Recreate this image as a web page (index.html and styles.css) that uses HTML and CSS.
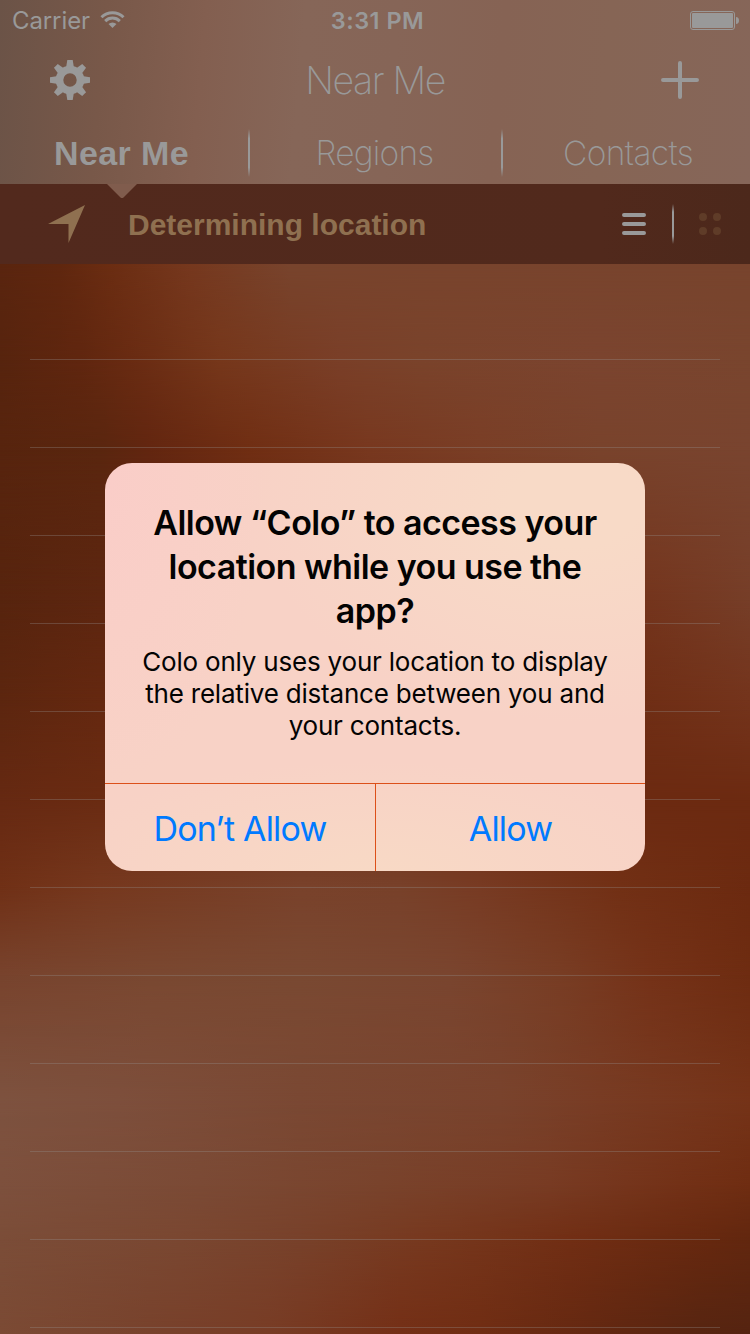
FILE: index.html
```
<!DOCTYPE html>
<html lang="en">
<head>
<meta charset="utf-8">
<title>Near Me</title>
<link rel="stylesheet" href="styles.css">
</head>
<body>
<div class="screen">
  <div class="wallpaper">
    <div class="band band-1"></div>
    <div class="band band-2"></div>
    <div class="band band-3"></div>
    <div class="band band-4"></div>
    <div class="band band-5"></div>
    <div class="band band-6"></div>
    <div class="band band-7"></div>
    <div class="band band-8"></div>
    <div class="band band-9"></div>
    <div class="band band-10"></div>
    <div class="band band-11"></div>
  </div>
  <main class="app">
    <header class="header">
      <div class="status">
        <div class="status-left">
          <span class="carrier">Carrier</span>
          <svg class="wifi" width="25" height="19" viewBox="0 0 26 20"><g fill="none" stroke="#999" stroke-width="3.1"><path d="M1.4 7.600a16.400 16.400 0 0 1 23.200 0"/><path d="M5.300 11.700a10.900 10.900 0 0 1 15.400 0"/></g><path fill="#999" d="M13 19l-4.200-4.200a6 6 0 0 1 8.400 0z"/></svg>
        </div>
        <span class="time">3:31 PM</span>
        <svg class="battery" width="49" height="19" viewBox="0 0 49 19"><rect x=".5" y=".5" width="44" height="18" rx="2.5" fill="none" stroke="#999"/><rect x="2" y="2" width="41" height="15" rx="1" fill="#999"/><path fill="#999" d="M46 6c2 0 3 1.500 3 3.500s-1 3.500-3 3.500z"/></svg>
      </div>
      <div class="navbar">
        <svg class="gear" width="40" height="40" viewBox="-20 -20 40 40"><defs><path id="tooth" d="M-4-12L-2.700-20H2.700L4-12z"/></defs><g fill="#999"><use href="#tooth"/><use href="#tooth" transform="rotate(45)"/><use href="#tooth" transform="rotate(90)"/><use href="#tooth" transform="rotate(135)"/><use href="#tooth" transform="rotate(180)"/><use href="#tooth" transform="rotate(225)"/><use href="#tooth" transform="rotate(270)"/><use href="#tooth" transform="rotate(315)"/></g><circle r="10.500" fill="none" stroke="#999" stroke-width="7.600"/></svg>
        <h1 class="nav-title">Near Me</h1>
        <svg class="plus" width="38" height="38" viewBox="0 0 38 38"><path d="M19 2v34M2 19h34" stroke="#999" stroke-width="4" stroke-linecap="round"/></svg>
      </div>
      <nav class="tabs">
        <span class="tab tab-active">Near Me</span>
        <i class="divider"></i>
        <span class="tab tab-regions">Regions</span>
        <i class="divider"></i>
        <span class="tab tab-contacts">Contacts</span>
      </nav>
    </header>
    <section class="locbar">
      <svg class="pointer" width="30" height="14" viewBox="0 0 30 14"><path d="M0 0h30L16.500 13.500q-1.500 1-3 0z" fill="#805c4d"/></svg>
      <svg class="arrow" width="37" height="39" viewBox="0 0 37 39"><path d="M37 0L20.500 38V19L0 19z" fill="#8f7050"/></svg>
      <span class="loc-text">Determining location</span>
      <svg class="list-icon" width="24" height="22" viewBox="0 0 24 22"><path d="M2 2h20M2 11h20M2 20h20" stroke="#999" stroke-width="4" stroke-linecap="round"/></svg>
      <i class="divider divider-small"></i>
      <svg class="grid-icon" width="22" height="22" viewBox="0 0 22 22"><g fill="#5f3c28"><circle cx="4" cy="4" r="4"/><circle cx="18" cy="4" r="4"/><circle cx="4" cy="18" r="4"/><circle cx="18" cy="18" r="4"/></g></svg>
    </section>
    <ul class="rows">
      <li class="row row-first"></li>
      <li class="row"></li><li class="row"></li><li class="row"></li>
      <li class="row"></li><li class="row"></li><li class="row"></li>
      <li class="row"></li><li class="row"></li><li class="row"></li>
      <li class="row"></li><li class="row"></li>
    </ul>
  </main>
  <div class="modal-layer">
    <div class="dialog" role="dialog">
      <div class="dialog-body">
        <h2 class="dialog-title">Allow “Colo” to access your<br>location while you use the<br>app?</h2>
        <p class="dialog-text">Colo only uses your location to display<br>the relative distance between you and<br>your contacts.</p>
      </div>
      <div class="actions">
        <button class="action action-deny">Don’t Allow</button>
        <button class="action">Allow</button>
      </div>
    </div>
  </div>
</div>
</body>
</html>
```
FILE: styles.css
```
* { box-sizing: border-box; }
body { margin: 0; }
.screen {
  display: grid;
  grid-template-columns: 750px;
  grid-template-rows: 1334px;
  width: 750px;
  height: 1334px;
  overflow: hidden;
  font-family: Inter, "Liberation Sans", sans-serif;
}
.screen > * { grid-area: 1 / 1; min-height: 0; }

/* Wallpaper: horizontal gradients, each fading vertically into the next. */
.wallpaper {
  --r1: linear-gradient(90deg, #5a250f 0, #60270f 60px, #6b2d12 110px, #76381e 190px, #78442d 290px, #79442d 450px, #78442d 750px);
  --r2: linear-gradient(90deg, #57240e 0, #60260f 80px, #692b12 130px, #76371b 220px, #7a3f28 340px, #7a432b 420px, #7b442f 600px, #79452e 750px);
  --r3: linear-gradient(90deg, #57240e 0, #5a260f 100px, #632610 150px, #702e13 250px, #78381f 370px, #7a3e26 480px, #79432c 600px, #79442f 750px);
  --r4: linear-gradient(90deg, #57240e 0, #5d2610 100px, #68280f 350px, #74341c 640px, #763e28 750px);
  --r5: linear-gradient(90deg, #5c260f 0, #652810 100px, #6b2a11 350px, #6f2e15 640px, #74341c 750px);
  --r6: linear-gradient(90deg, #662912 0, #6a2b12 100px, #6e2d14 350px, #6c2a11 640px, #6c2a11 750px);
  --r7: linear-gradient(90deg, #703016 0, #76381e 100px, #79422b 300px, #78412a 400px, #783b23 480px, #723015 620px, #6c2a10 750px);
  --r8: linear-gradient(90deg, #78432d 0, #7a4831 150px, #7a4932 300px, #7a452f 450px, #783d24 560px, #753218 650px, #6e2c11 750px);
  --r9: linear-gradient(90deg, #7d523f 0, #7d4f3c 120px, #7a4833 300px, #79432d 500px, #783c24 600px, #753318 750px);
  --r10: linear-gradient(90deg, #7d503d 0, #7b4a35 200px, #79432c 380px, #783b23 550px, #733117 680px, #6f2d12 750px);
  --r11: linear-gradient(90deg, #7b4d38 0, #7a4731 180px, #78412a 300px, #77381e 430px, #712e14 570px, #66280f 710px, #62270f 750px);
  --r12: linear-gradient(90deg, #7b4a34 0, #78422c 150px, #783c25 270px, #742f16 400px, #702d13 480px, #642811 590px, #572511 700px, #552411 750px);
  display: grid;
  grid-template-rows: 96px 90px 150px 100px 100px 87px 88px 125px 85px 55px 94px;
  padding-top: 264px;
}
.band { background: var(--top); }
.band::before {
  content: "";
  display: block;
  height: 100%;
  background: var(--bottom);
  -webkit-mask-image: linear-gradient(transparent, #000);
  mask-image: linear-gradient(transparent, #000);
}
.band-1 { --top: var(--r1); --bottom: var(--r2); }
.band-2 { --top: var(--r2); --bottom: var(--r3); }
.band-3 { --top: var(--r3); --bottom: var(--r4); }
.band-4 { --top: var(--r4); --bottom: var(--r5); }
.band-5 { --top: var(--r5); --bottom: var(--r6); }
.band-6 { --top: var(--r6); --bottom: var(--r7); }
.band-7 { --top: var(--r7); --bottom: var(--r8); }
.band-8 { --top: var(--r8); --bottom: var(--r9); }
.band-9 { --top: var(--r9); --bottom: var(--r10); }
.band-10 { --top: var(--r10); --bottom: var(--r11); }
.band-11 { --top: var(--r11); --bottom: var(--r12); }

.app { position: relative; color: #999; }
.header {
  height: 184px;
  background: linear-gradient(95deg, #6b5347 0, #785849 14%, #835f50 27%, #866658 40%, #866557 52%, #866354 66%, #866555 80%, #866659 100%);
}
.status {
  display: grid;
  grid-template-columns: 1fr auto 1fr;
  align-items: center;
  height: 40px;
  padding: 0 11px 0 12px;
}
.status-left { display: flex; align-items: center; gap: 10px; }
.carrier { font-size: 24px; letter-spacing: -.1px; }
.wifi { margin-top: -1px; }
.time { margin-left: 4px; font-size: 23.5px; font-weight: 600; letter-spacing: .5px; }
.battery { justify-self: end; }
.navbar {
  display: flex;
  align-items: center;
  justify-content: space-between;
  height: 80px;
  padding: 0 51px 0 50px;
}
.nav-title { margin: 0; padding-right: 1px; font-size: 37.5px; font-weight: 250; letter-spacing: -1.4px; }
.tabs { display: flex; align-items: center; height: 66px; }
.tab { width: 251px; text-align: center; font-size: 33.5px; font-weight: 200; letter-spacing: -.8px; }
.tab-regions { padding-right: 2px; }
.tab-contacts { width: 247px; padding-left: 3px; letter-spacing: -.6px; }
.tab-active { width: 248px; padding-right: 5px; font: bold 34px "Liberation Sans", sans-serif; letter-spacing: .4px; }
.divider {
  flex: none;
  width: 2px;
  height: 48px;
  background: linear-gradient(transparent, #999 20%, #999 80%, transparent);
}
.divider-small { height: 40px; margin: 0 25px 0 26px; }
.locbar {
  display: flex;
  align-items: center;
  height: 80px;
  padding: 0 29px 0 48px;
  background: linear-gradient(90deg, #52291d, #51291c 80%, #4c281b);
}
.pointer { position: absolute; left: 107px; top: 184px; }
.loc-text { margin: 2px auto 0 43px; color: #8f7050; font: bold 30px "Liberation Sans", sans-serif; }
.rows { margin: 0; padding: 0 30px; list-style: none; }
.row { height: 88px; border-bottom: 1px solid rgba(153, 153, 153, .3); }
.row-first { height: 96px; }

.modal-layer { position: relative; display: grid; place-items: center; }
.dialog {
  width: 540px;
  height: 408px;
  border-radius: 27px;
  overflow: hidden;
  color: #030303;
  text-align: center;
  background:
    radial-gradient(ellipse 160px 300px at 0 20px, #facdc8, transparent),
    radial-gradient(ellipse 320px 220px at 470px 40px, #f8dac7 20%, transparent),
    radial-gradient(ellipse 330px 110px at 270px 408px, #f8d9c5, transparent),
    #f8d2c6;
}
.dialog-body { height: 320px; padding-top: 38px; }
.dialog-title { margin: 0; font-size: 34px; font-weight: 600; line-height: 44px; letter-spacing: -.53px; }
.dialog-text { margin: 13px 0 0; font-size: 26px; line-height: 32px; letter-spacing: -.2px; }
.actions { display: grid; grid-template-columns: 271px 269px; height: 88px; border-top: 1px solid #dc5019; }
.action {
  padding: 1px 0 0;
  border: 0;
  background: none;
  color: #007aff;
  font: 34px Inter, sans-serif;
  letter-spacing: -.8px;
}
.action-deny { border-right: 1px solid #dc5019; }
```
